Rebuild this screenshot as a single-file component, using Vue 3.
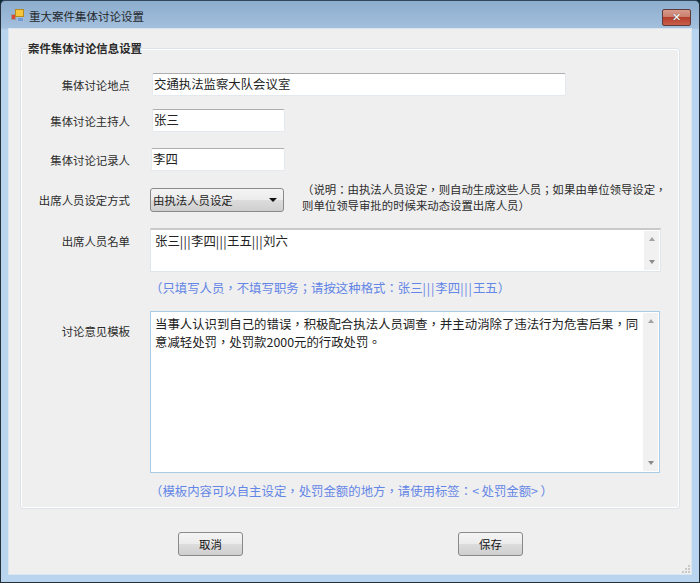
<script setup>
const rows = [
  { label: '集体讨论主持人', value: '张三', cls: 'host' },
  { label: '集体讨论记录人', value: '李四', cls: 'recorder' },
]
</script>

<template>
  <div class="window">
    <header class="titlebar">
      <svg class="app-icon" width="16" height="16" viewBox="0 0 16 16">
        <rect x="1.5" y="6.5" width="4" height="5" fill="#d8483a" stroke="#9a9a9a" />
        <rect x="7.5" y="9.5" width="6" height="4" fill="#6d9ad8" stroke="#a9bcd6" />
        <rect x="5.5" y="1.5" width="8" height="7" fill="#f5c63c" stroke="#b58a1e" />
      </svg>
      <span class="title">重大案件集体讨论设置</span>
      <div class="close"><span class="close-x">✕</span></div>
    </header>
    <main class="client">
      <fieldset class="group">
        <legend class="legend">案件集体讨论信息设置</legend>
        <div class="row first">
          <label class="label nudge">集体讨论地点</label>
          <div class="input wide">交通执法监察大队会议室</div>
        </div>
        <div v-for="r in rows" :key="r.label" class="row gap16">
          <label class="label nudge">{{ r.label }}</label>
          <div class="input" :class="r.cls">{{ r.value }}</div>
        </div>
        <div class="row mode">
          <label class="label">出席人员设定方式</label>
          <div class="select">
            <span>由执法人员设定</span>
            <i class="caret"></i>
          </div>
          <p class="note">（说明：由执法人员设定，则自动生成这些人员；如果由单位领导设定，<br />则单位领导审批的时候来动态设置出席人员）</p>
        </div>
        <div class="row names">
          <label class="label top">出席人员名单</label>
          <div class="memo names-box">
            <div class="memo-text names-text">张三<span class="pipes">|||</span>李四<span class="pipes">|||</span>王五<span class="pipes">|||</span>刘六</div>
            <div class="scroll"><i class="up"></i><i class="down"></i></div>
          </div>
        </div>
        <p class="hint hint-a">（只填写人员，不填写职务；请按这种格式：张三<span class="pipes-wide">|||</span>李四<span class="pipes-wide">|||</span>王五）</p>
        <div class="row tpl">
          <label class="label top tpl-label">讨论意见模板</label>
          <div class="memo tpl-box">
            <div class="memo-text">当事人认识到自己的错误，积极配合执法人员调查，并主动消除了违法行为危害后果，同意减轻处罚，处罚款2000元的行政处罚。</div>
            <div class="scroll"><i class="up"></i><i class="down"></i></div>
          </div>
        </div>
        <p class="hint hint-b">（模板内容可以自主设定，处罚金额的地方，请使用标签：<span class="angle">&lt;</span>处罚金额<span class="angle">&gt;</span>）</p>
      </fieldset>
      <div class="actions">
        <button class="btn" type="button">取消</button>
        <button class="btn" type="button">保存</button>
      </div>
      <svg class="grip" width="10" height="10" viewBox="0 0 10 10">
        <path d="M7 1h2v2H7zM4 4h2v2H4zM7 4h2v2H7zM1 7h2v2H1zM4 7h2v2H4zM7 7h2v2H7z" fill="#c9c9c9" />
      </svg>
    </main>
  </div>
</template>

<style>
html, body { margin: 0; background: #0b2a36; }
</style>

<style scoped>
.window {
  width: 700px;
  height: 583px;
  box-sizing: border-box;
  padding: 0 7px 7px;
  border: 1px solid #24303c;
  border-top-color: #33475a;
  border-radius: 5px 5px 0 0;
  background: linear-gradient(#8dadcd 0, #a3c0dd 27px, #b9d4ee 29px);
  font-family: "Noto Sans CJK TC", "Liberation Sans", sans-serif;
  font-size: 11.4px;
  color: #2c2c2c;
  display: flex;
  flex-direction: column;
}
.titlebar {
  height: 27px;
  flex: none;
  display: flex;
  align-items: center;
  position: relative;
}
.app-icon { margin-left: 2px; margin-top: 2px; }
.title { margin-left: 3px; margin-top: 2px; font-size: 11.5px; color: #24282c; }
.close {
  position: absolute;
  right: 1px;
  top: 8px;
  width: 29px;
  height: 17px;
  box-sizing: border-box;
  border: 1px solid #5f3a3a;
  border-radius: 2px;
  background: linear-gradient(#d99a8a 0, #cb7f6e 45%, #b33e2c 50%, #c9604c 100%);
  display: flex;
  align-items: center;
  justify-content: center;
}
.close-x { color: #fff; font: bold 11px/1 "DejaVu Sans", sans-serif; text-shadow: 0 0 1px #555; }
.client {
  flex: 1;
  background: #efefef;
  border: 1px solid #dbe6f0;
  position: relative;
  padding: 11px 11px 0 11px;
  display: flex;
  flex-direction: column;
}
.group {
  margin: 0;
  padding: 0;
  height: 469px;
  box-sizing: border-box;
  border: 1px solid #dde3e8;
  box-shadow: inset 0 0 0 1px #fff;
  border-radius: 3px;
  flex: none;
  min-inline-size: 0;
}
.legend {
  margin-left: 7px;
  padding: 0;
  font-weight: 700;
  font-size: 11.4px;
  line-height: 16px;
  color: #2a2a2a;
}
.row { display: flex; align-items: center; }
.first { margin-top: 17px; }
.gap16 { margin-top: 13px; }
.gap16 + .gap16 { margin-top: 16px; }
.label {
  width: 109px;
  margin-right: 20px;
  text-align: right;
  flex: none;
  line-height: 16px;
}
.nudge { padding-top: 1px; }
.label.top { align-self: flex-start; margin-top: 5px; }
.label.tpl-label { margin-top: 12px; }
.input {
  height: 23px;
  box-sizing: border-box;
  background: #fff;
  font-size: 12.4px;
  line-height: 21px;
  padding-left: 1px;
  color: #222;
  border: 1px solid #e3e9ef;
  border-top-color: #aeaeae;
  border-radius: 2px;
}
.wide { width: 414px; margin-left: 2px; }
.host { width: 133px; margin-left: 2px; }
.recorder { width: 134px; margin-left: 1px; }
.mode { margin-top: 17px; height: 24px; }
.select {
  width: 134px;
  height: 24px;
  box-sizing: border-box;
  border: 1px solid #8a8a8a;
  border-radius: 3px;
  background: linear-gradient(#f4f4f4 0, #ececec 48%, #dcdcdc 52%, #cfcfcf 100%);
  display: flex;
  align-items: center;
  justify-content: space-between;
  padding: 0 6px 0 2px;
  color: #222;
  font-size: 11.4px;
}
.caret {
  width: 0;
  height: 0;
  border: 4px solid transparent;
  border-top: 4px solid #111;
  border-bottom: 0;
}
.note {
  margin: -7px 0 0 18px;
  align-self: flex-start;
  font-size: 11.4px;
  line-height: 16px;
  white-space: nowrap;
}
.names { margin-top: 16px; }
.memo {
  width: 511px;
  box-sizing: border-box;
  background: #fff;
  display: flex;
  font-size: 12.4px;
  color: #222;
}
.names-box { height: 44px; border: 1px solid #e0e5ea; border-top: 2px solid #c9c9c9; }
.tpl-box { height: 162px; border: 1px solid #a9cde6; width: 510px; }
.memo-text { flex: 1; padding: 3px 0 3px 4px; line-height: 18px; }
.names-text { padding-top: 2px; }
.pipes { letter-spacing: 0.4px; }
.pipes-wide { letter-spacing: 0.9px; }
.angle { letter-spacing: 2.5px; }
.scroll {
  width: 15px;
  margin: 1px;
  flex: none;
  background: #f1f1f1;
  display: flex;
  flex-direction: column;
  justify-content: space-between;
  align-items: center;
  padding: 6px 0;
  box-sizing: border-box;
}
.up { width: 0; height: 0; border: 3.5px solid transparent; border-bottom: 4px solid #a2a2a2; border-top: 0; }
.down { width: 0; height: 0; border: 3.5px solid transparent; border-top: 4px solid #8a8a8a; border-bottom: 0; }
.hint {
  margin: 0;
  padding-left: 129px;
  color: #6486e6;
  font-size: 12.4px;
  line-height: 18px;
  white-space: nowrap;
}
.hint-a { margin-top: 7px; }
.tpl { margin-top: 14px; }
.hint-b { margin-top: 9px; }
.actions {
  margin-top: 23px;
  padding: 0 157px 0 158px;
  display: flex;
  justify-content: space-between;
}
.btn {
  width: 65px;
  height: 24px;
  padding: 0;
  box-sizing: border-box;
  border: 1px solid #8a8a8a;
  border-radius: 3px;
  background: linear-gradient(#f4f4f4 0, #ececec 48%, #dcdcdc 52%, #cfcfcf 100%);
  font-family: inherit;
  font-size: 11.4px;
  color: #111;
}
.grip { position: absolute; right: 0; bottom: 0; }
</style>
